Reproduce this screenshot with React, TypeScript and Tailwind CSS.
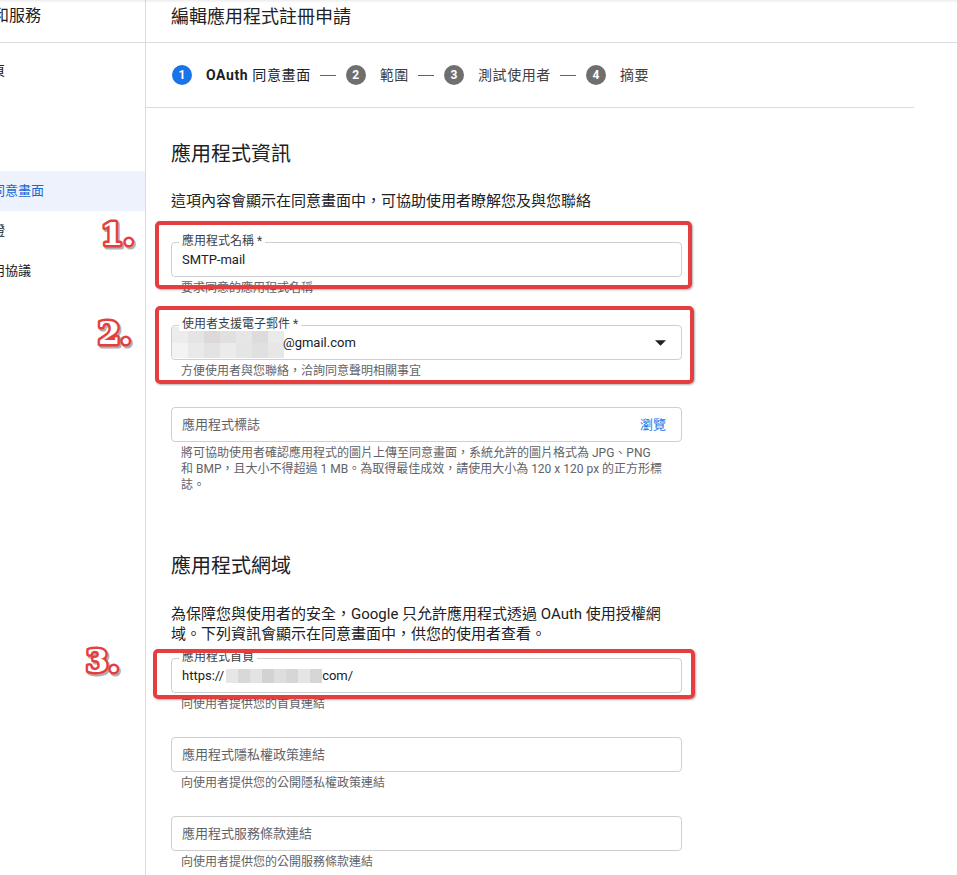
import React from "react";

const sideItems: { t: string; active?: boolean }[] = [
  { t: "資訊主頁" },
  { t: "程式庫" },
  { t: "憑證" },
  { t: "OAuth 同意畫面", active: true },
  { t: "網域驗證" },
  { t: "頁面使用協議" },
];

const mosaicA = [
  "bg-[#ececec]", "bg-[#e4e4e4]", "bg-[#dcd8dc]", "bg-[#e0e0e0]", "bg-[#e6e6e6]", "bg-[#dcdcdc]", "bg-[#eaeaea]",
  "bg-[#f3f3f3]", "bg-[#e9e9e9]", "bg-[#e3e3e3]", "bg-[#ebebeb]", "bg-[#e5e5e5]", "bg-[#e0e0e0]", "bg-[#e7e7e7]",
];

const mosaicB = [
  "bg-[#e6e6e6]", "bg-[#d8d8d8]", "bg-[#e3e3e3]", "bg-[#d2d2d2]", "bg-[#dedede]", "bg-[#d6d6d6]", "bg-[#e5e5e5]", "bg-[#d6d6d6]",
];

function Circle({ n, active }: { n: number; active?: boolean }) {
  return (
    <span
      className={
        "w-[20px] h-[20px] rounded-full flex items-center justify-center text-[12px] font-bold text-white shrink-0 tracking-normal " +
        (active ? "bg-[#1a73e8]" : "bg-[#6f6f6f]")
      }
    >
      {n}
    </span>
  );
}

function Dash() {
  return <span className="ml-[9px] mr-[10px] w-[16px] h-px bg-[#5f6368] shrink-0" />;
}

function Field({
  label,
  children,
  trailing,
  hint,
  className,
}: {
  label?: string;
  children: React.ReactNode;
  trailing?: React.ReactNode;
  hint: React.ReactNode;
  className?: string;
}) {
  return (
    <div className={className}>
      <div className="relative h-[35px] rounded-[4px] border border-[#cfcfcf] flex items-center pl-[9px] pr-[15px]">
        {label && (
          <span className="absolute -top-[9px] left-[7px] bg-white px-[3px] text-[12px] leading-[14px] text-[#3c4043] whitespace-nowrap">
            {label}
          </span>
        )}
        <div className="flex-1 flex items-center text-[13px] leading-[18px] min-w-0">{children}</div>
        {trailing}
      </div>
      <div className="mt-[3px] pl-[10px] text-[12px] leading-[16px] text-[#5f6368]">{hint}</div>
    </div>
  );
}

function Numeral({ t }: { t: string }) {
  return (
    <svg width="46" height="42" viewBox="0 0 46 42">
      <text
        x="5"
        y="33"
        fontFamily="DejaVu Serif, serif"
        fontWeight="bold"
        fontSize="32"
        fill="#b0b0b0"
        stroke="#b0b0b0"
        strokeWidth="5"
        strokeLinejoin="round"
        transform="translate(1.5 1.5)"
      >
        {t}
      </text>
      <text
        x="5"
        y="33"
        fontFamily="DejaVu Serif, serif"
        fontWeight="bold"
        fontSize="32"
        fill="#ffffff"
        stroke="#e53e3e"
        strokeWidth="5"
        strokeLinejoin="round"
        paintOrder="stroke"
      >
        {t}
      </text>
    </svg>
  );
}

export default function App() {
  return (
    <div className="relative w-[957px] h-[875px] overflow-hidden bg-white flex text-[#202124] [font-family:Roboto,'Noto_Sans_CJK_TC',sans-serif]">
      {/* Sidebar */}
      <aside className="w-[146px] shrink-0 border-r border-[#dadce0] overflow-hidden">
        <div className="h-[43px] border-b border-[#dadce0] pt-[4px]">
          <div className="w-[41px] flex justify-end whitespace-nowrap text-[16px] leading-[24px]">API 和服務</div>
        </div>
        <div className="pt-[8px] ml-[-47px] w-[192px]">
          {sideItems.map((it) => (
            <div
              key={it.t}
              className={
                "h-[40px] flex items-center text-[13px] whitespace-nowrap " +
                (it.active ? "bg-[#edf2fd] text-[#1967d2]" : "text-[#202124]")
              }
            >
              {it.t}
            </div>
          ))}
        </div>
      </aside>

      {/* Main */}
      <main className="flex-1 min-w-0">
        <div className="h-[43px] border-b border-[#dadce0] pl-[25px] pt-[5px] text-[18px] leading-[24px]">
          編輯應用程式註冊申請
        </div>

        <div className="w-[768px] h-[65px] border-b border-[#dadce0] pl-[26px] flex items-center text-[14px] whitespace-nowrap">
          <Circle n={1} active />
          <span className="ml-[14px] text-[#202124] tracking-[0.6px]">
            <span className="font-bold">OAuth</span> 同意畫面
          </span>
          <Dash />
          <Circle n={2} />
          <span className="ml-[14px] text-[#3c4043] tracking-[0.6px]">範圍</span>
          <Dash />
          <Circle n={3} />
          <span className="ml-[14px] text-[#3c4043] tracking-[0.6px]">測試使用者</span>
          <Dash />
          <Circle n={4} />
          <span className="ml-[14px] text-[#3c4043] tracking-[0.6px]">摘要</span>
        </div>

        <div className="pl-[25px] w-[536px]">
          <h2 className="mt-[32px] text-[20px] leading-[28px] font-normal">應用程式資訊</h2>
          <p className="mt-[23px] text-[15px] leading-[20px] whitespace-nowrap">
            這項內容會顯示在同意畫面中，可協助使用者瞭解您及與您聯絡
          </p>

          <Field className="mt-[31px]" label="應用程式名稱 *" hint="要求同意的應用程式名稱">
            <span className="pl-[1px]">SMTP-mail</span>
          </Field>

          <Field
            className="mt-[29px]"
            label="使用者支援電子郵件 *"
            hint="方便使用者與您聯絡，洽詢同意聲明相關事宜"
            trailing={
              <svg width="11" height="6" viewBox="0 0 10 5" className="shrink-0">
                <path d="M0 0h10L5 5z" fill="#202124" />
              </svg>
            }
          >
            <span className="-ml-[9px] grid grid-cols-7 w-[112px] h-[31px] shrink-0">
              {mosaicA.map((c, i) => (
                <span key={i} className={c} />
              ))}
            </span>
            <span className="-ml-[1px]">@gmail.com</span>
          </Field>

          <Field
            className="mt-[28px]"
            hint={
              <>
                將可協助使用者確認應用程式的圖片上傳至同意畫面，系統允許的圖片格式為 JPG、PNG
                <br />
                和 BMP，且大小不得超過 1 MB。為取得最佳成效，請使用大小為 120 x 120 px 的正方形標
                <br />
                誌。
              </>
            }
            trailing={<span className="text-[13px] text-[#1a73e8] shrink-0">瀏覽</span>}
          >
            <span className="pl-[1px] text-[#5f6368]">應用程式標誌</span>
          </Field>

          <h2 className="mt-[59px] text-[20px] leading-[28px] font-normal">應用程式網域</h2>
          <p className="mt-[24px] text-[15px] leading-[20px] whitespace-nowrap">
            為保障您與使用者的安全，Google 只允許應用程式透過 OAuth 使用授權網
            <br />
            域。下列資訊會顯示在同意畫面中，供您的使用者查看。
          </p>

          <Field className="mt-[14px]" label="應用程式首頁" hint="向使用者提供您的首頁連結">
            <span className="pl-[1px]">https://</span>
            <span className="ml-[2px] flex h-[14px] w-[96px] shrink-0">
              {mosaicB.map((c, i) => (
                <span key={i} className={"flex-1 " + c} />
              ))}
            </span>
            <span>com/</span>
          </Field>

          <Field className="mt-[25px]" hint="向使用者提供您的公開隱私權政策連結">
            <span className="pl-[1px] text-[#5f6368]">應用程式隱私權政策連結</span>
          </Field>

          <Field className="mt-[25px]" hint="向使用者提供您的公開服務條款連結">
            <span className="pl-[1px] text-[#5f6368]">應用程式服務條款連結</span>
          </Field>
        </div>
      </main>

      {/* top shadow */}
      <div className="absolute inset-x-0 top-0 h-[3px] bg-linear-to-b from-[rgba(0,0,0,0.07)] to-transparent pointer-events-none" />

      {/* Annotation boxes */}
      <div className="absolute left-[155px] top-[221px] w-[537px] h-[68px] border-[4px] border-[#e53e3e] rounded-[5px] shadow-[1px_1px_2px_rgba(0,0,0,0.3)] pointer-events-none" />
      <div className="absolute left-[155px] top-[306px] w-[539px] h-[78px] border-[4px] border-[#e53e3e] rounded-[5px] shadow-[1px_1px_2px_rgba(0,0,0,0.3)] pointer-events-none" />
      <div className="absolute left-[153px] top-[649px] w-[542px] h-[50px] border-[4px] border-[#e53e3e] rounded-[5px] shadow-[1px_1px_2px_rgba(0,0,0,0.3)] pointer-events-none" />

      <div className="absolute left-[96px] top-[212px]">
        <Numeral t="1." />
      </div>
      <div className="absolute left-[93px] top-[311px]">
        <Numeral t="2." />
      </div>
      <div className="absolute left-[81px] top-[639px]">
        <Numeral t="3." />
      </div>
    </div>
  );
}
